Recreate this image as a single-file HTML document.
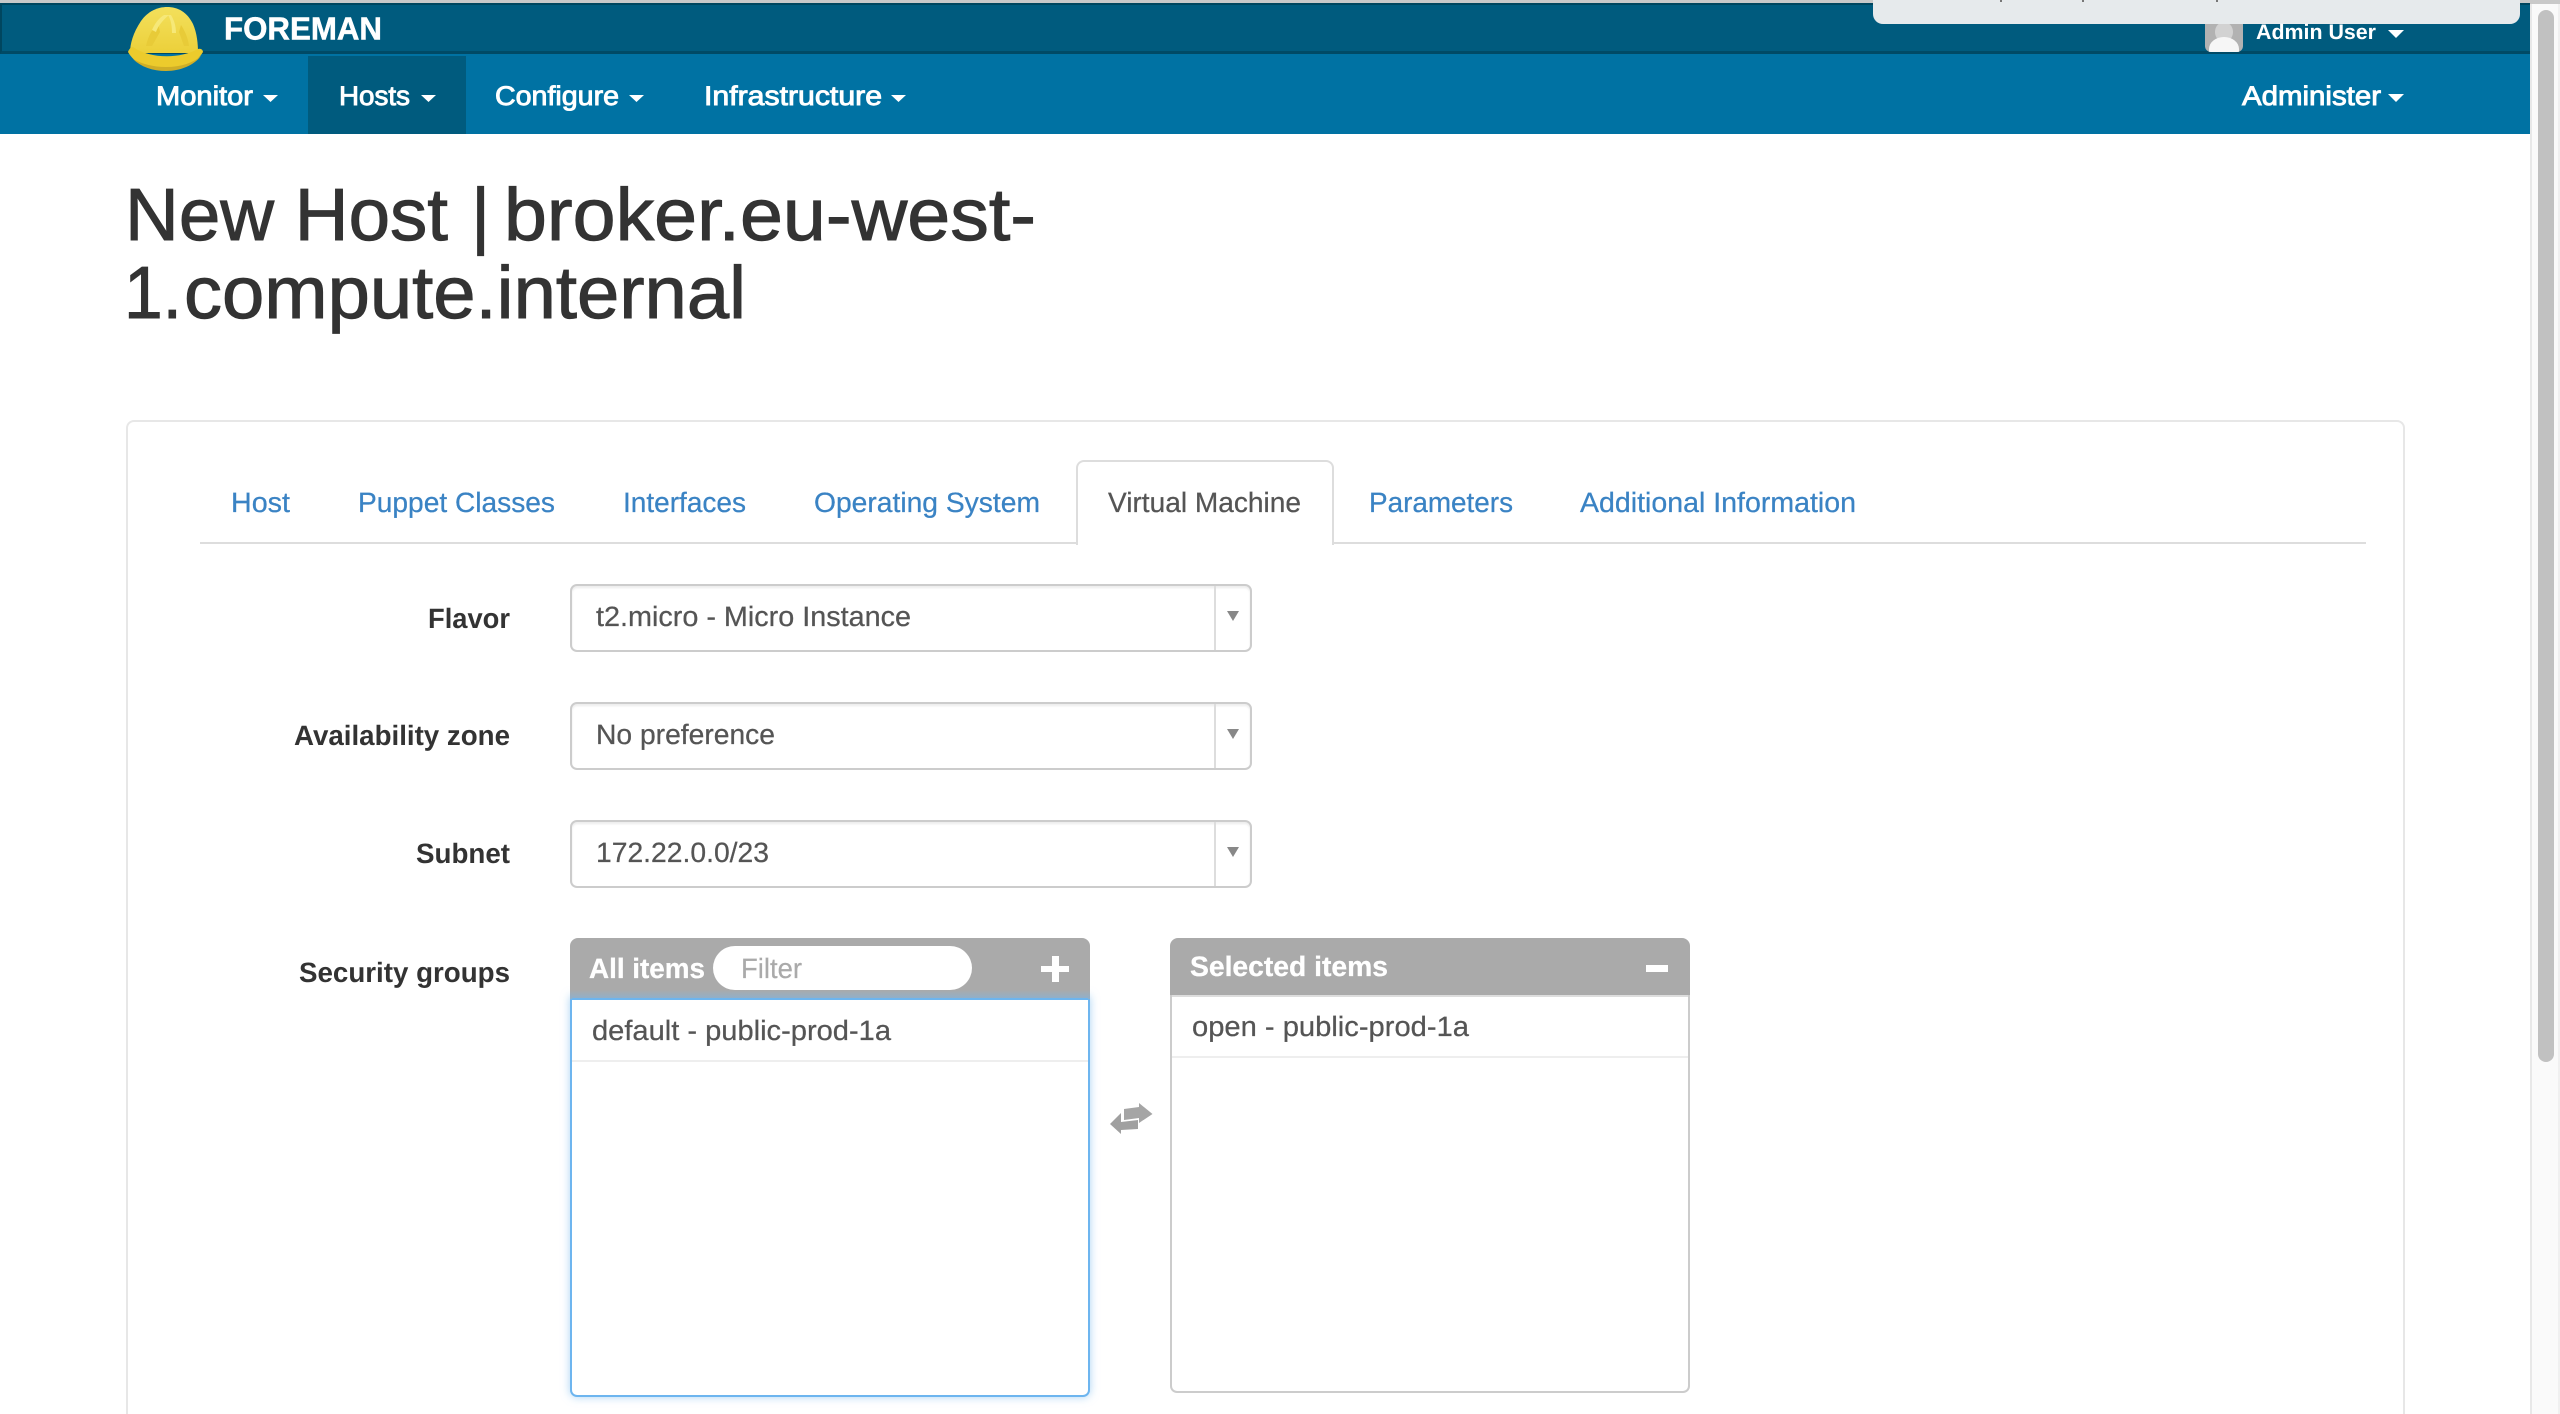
<!DOCTYPE html>
<html lang="en">
<head>
<meta charset="utf-8">
<title>New Host | broker.eu-west-1.compute.internal</title>
<style>
html,body{margin:0;padding:0;width:2560px;height:1414px;overflow:hidden;background:#fff}
body{position:relative;font-family:"Liberation Sans",sans-serif}
.b{position:absolute;box-sizing:border-box}
svg{position:absolute;left:0;top:0}
text{font-family:"Liberation Sans",sans-serif;text-rendering:geometricPrecision}
.nav{font-size:27px;fill:#fff;stroke:#fff;stroke-width:.9px}
.tab{font-size:28px;fill:#3a83c4;stroke:#3a83c4;stroke-width:.25px}
.lab{font-size:28px;font-weight:bold;fill:#333}
.val{font-size:28px;fill:#555;stroke:#555;stroke-width:.25px}
.h1{font-size:74px;fill:#333;stroke:#333;stroke-width:1px}
.wh{font-size:28px;font-weight:bold;fill:#fff;stroke:#fff;stroke-width:.3px}
.sel{border:2px solid #ccc;border-radius:7px;box-shadow:inset 0 2px 2px rgba(0,0,0,.08);background:#fff;left:570px;width:682px}
.div{width:2px;background:#ddd;left:1214px}
.hd{background:#aaa;border-radius:8px 8px 0 0}
</style>
</head>
<body>
<!-- top bars -->
<div class="b" style="left:0;top:0;width:2560px;height:4px;background:#c9c9c9"></div>
<div class="b" style="left:0;top:3px;width:2530px;height:51px;background:#005b7e;border-top:2px solid #00465f;border-left:2px solid #00465f;border-bottom:3px solid #004a66"></div>
<div class="b" style="left:0;top:54px;width:2530px;height:80px;background:#0072a3"></div>
<div class="b" style="left:308px;top:56px;width:158px;height:78px;background:#005b7e"></div>

<!-- avatar -->
<div class="b" style="left:2205px;top:20px;width:38px;height:32px;background:#b2b2b2;border-radius:0 0 6px 6px;overflow:hidden">
  <div class="b" style="left:10px;top:2px;width:18px;height:20px;border-radius:50%;background:#d2d2d2"></div>
  <div class="b" style="left:4px;top:17px;width:30px;height:24px;border-radius:50% 50% 0 0;background:#f6f6f6"></div>
</div>

<!-- popup -->
<div class="b" style="left:1873px;top:0;width:647px;height:24px;background:#e6eaec;border-radius:0 0 10px 10px"></div>
<div class="b" style="left:2000px;top:0;width:2px;height:2px;background:#777"></div>
<div class="b" style="left:2082px;top:0;width:2px;height:2px;background:#777"></div>
<div class="b" style="left:2216px;top:0;width:2px;height:2px;background:#777"></div>

<!-- scrollbar -->
<div class="b" style="left:2530px;top:4px;width:30px;height:1410px;background:#fafafa;border-left:2px solid #e8e8e8;border-right:2px solid #f0f0f0"></div>
<div class="b" style="left:2538px;top:10px;width:16px;height:1052px;background:#c1c1c1;border-radius:8px"></div>

<!-- main panel -->
<div class="b" style="left:126px;top:420px;width:2279px;height:994px;border:2px solid #e7e7e7;border-bottom:0;border-radius:8px 8px 0 0"></div>

<!-- tabs -->
<div class="b" style="left:200px;top:542px;width:2166px;height:2px;background:#ddd"></div>
<div class="b" style="left:1076px;top:460px;width:258px;height:85px;background:#fff;border:2px solid #ddd;border-bottom:0;border-radius:8px 8px 0 0"></div>

<!-- selects -->
<div class="b sel" style="top:584px;height:68px"></div>
<div class="b div" style="top:586px;height:64px"></div>
<div class="b sel" style="top:702px;height:68px"></div>
<div class="b div" style="top:704px;height:64px"></div>
<div class="b sel" style="top:820px;height:68px"></div>
<div class="b div" style="top:822px;height:64px"></div>

<!-- left list -->
<div class="b" style="left:570px;top:996px;width:520px;height:401px;background:#fff;border:2px solid #6db5ef;border-radius:0 0 7px 7px;box-shadow:0 0 9px rgba(102,175,233,.55)"></div>
<div class="b hd" style="left:570px;top:938px;width:520px;height:61px;background:linear-gradient(#aaa 0,#aaa 85%,#8fb0cc 100%)"></div>
<div class="b" style="left:572px;top:998px;width:516px;height:2px;background:#6db5ef"></div>
<div class="b" style="left:572px;top:1060px;width:516px;height:2px;background:#eee"></div>
<div class="b" style="left:713px;top:946px;width:259px;height:44px;background:#fff;border-radius:22px"></div>
<div class="b" style="left:1041px;top:966px;width:28px;height:6px;background:#fff"></div>
<div class="b" style="left:1052px;top:956px;width:7px;height:26px;background:#fff"></div>

<!-- right list -->
<div class="b" style="left:1170px;top:990px;width:520px;height:403px;background:#fff;border:2px solid #ccc;border-radius:0 0 7px 7px"></div>
<div class="b hd" style="left:1170px;top:938px;width:520px;height:57px"></div>
<div class="b" style="left:1172px;top:995px;width:516px;height:2px;background:#ddd"></div>
<div class="b" style="left:1172px;top:1056px;width:516px;height:2px;background:#eee"></div>
<div class="b" style="left:1646px;top:965px;width:22px;height:7px;background:#fff"></div>

<!-- text and icons -->
<svg width="2560" height="1414" viewBox="0 0 2560 1414" xmlns="http://www.w3.org/2000/svg">
  <defs>
    <linearGradient id="dome" x1="0" y1="0" x2="0" y2="1">
      <stop offset="0" stop-color="#f3e05c"/>
      <stop offset="1" stop-color="#ecd03a"/>
    </linearGradient>
  </defs>
  <!-- helmet -->
  <path d="M130 53C130 44 133 33 141 21C148 11 158 7 167 7C178 7 187 12 193 24C197 33 198 44 198 53Z" fill="url(#dome)"/>
  <path d="M146 46C148 36 153 28 158 23L160 32L152 46Z" fill="#e8cb38"/>
  <path d="M189 46C188 38 185 31 181 25L179 32L184 46Z" fill="#e8cb38"/>
  <path d="M152 30C155 23 159 18 164 15L169 15C163 20 158 26 156 32Z" fill="#f6e878"/>
  <path d="M171 15C174 20 176 26 176 33L172 33C172 26 171 20 168 15Z" fill="#f6e878"/>
  <path d="M128 52C129 49 131 47 133 47C150 59 180 59 198 49C201 48 203 50 203 52C196 64 182 70 166 70C148 70 134 63 128 52Z" fill="#eccb2c"/>
  <path d="M133 59C141 67 153 71 166 71C181 71 194 65 201 56C193 63 181 67 166 67C153 67 142 64 133 59Z" fill="#cfae27"/>

  <text x="224" y="39.500" font-size="32" font-weight="bold" fill="#fff" stroke="#fff" stroke-width=".5" textLength="158" lengthAdjust="spacingAndGlyphs">FOREMAN</text>
  <text x="2256" y="39" font-size="21" font-weight="bold" fill="#fff" textLength="120" lengthAdjust="spacingAndGlyphs">Admin User</text>
  <path d="M2388 30H2404L2396 38Z" fill="#fff"/>

  <text class="nav" x="156" y="105" textLength="97" lengthAdjust="spacingAndGlyphs">Monitor</text>
  <path d="M263 95H278L270.500 102Z" fill="#fff"/>
  <text class="nav" x="339" y="105" textLength="71" lengthAdjust="spacingAndGlyphs">Hosts</text>
  <path d="M421 95H436L428.500 102Z" fill="#fff"/>
  <text class="nav" x="495" y="105" textLength="124" lengthAdjust="spacingAndGlyphs">Configure</text>
  <path d="M629 95H644L636.500 102Z" fill="#fff"/>
  <text class="nav" x="704" y="105" textLength="178" lengthAdjust="spacingAndGlyphs">Infrastructure</text>
  <path d="M891 95H906L898.500 102Z" fill="#fff"/>
  <text class="nav" x="2242" y="105" textLength="139" lengthAdjust="spacingAndGlyphs">Administer</text>
  <path d="M2388 94H2404L2396 102Z" fill="#fff"/>

  <text class="h1" x="125" y="240" textLength="323" lengthAdjust="spacingAndGlyphs">New Host</text>
  <text class="h1" x="471" y="240">|</text>
  <text class="h1" x="504" y="240" textLength="532" lengthAdjust="spacingAndGlyphs">broker.eu-west-</text>
  <text class="h1" x="124" y="318" textLength="58" lengthAdjust="spacingAndGlyphs">1.</text>
  <text class="h1" x="184" y="318" textLength="562" lengthAdjust="spacingAndGlyphs">compute.internal</text>

  <text class="tab" x="231" y="512" textLength="59" lengthAdjust="spacingAndGlyphs">Host</text>
  <text class="tab" x="358" y="512" textLength="197" lengthAdjust="spacingAndGlyphs">Puppet Classes</text>
  <text class="tab" x="623" y="512" textLength="123" lengthAdjust="spacingAndGlyphs">Interfaces</text>
  <text class="tab" x="814" y="512" textLength="226" lengthAdjust="spacingAndGlyphs">Operating System</text>
  <text x="1108" y="512" font-size="28" fill="#555" stroke="#555" stroke-width=".25" textLength="193" lengthAdjust="spacingAndGlyphs">Virtual Machine</text>
  <text class="tab" x="1369" y="512" textLength="144" lengthAdjust="spacingAndGlyphs">Parameters</text>
  <text class="tab" x="1580" y="512" textLength="276" lengthAdjust="spacingAndGlyphs">Additional Information</text>

  <text class="lab" x="428" y="628" textLength="82" lengthAdjust="spacingAndGlyphs">Flavor</text>
  <text class="lab" x="294" y="745" textLength="216" lengthAdjust="spacingAndGlyphs">Availability zone</text>
  <text class="lab" x="416" y="863" textLength="94" lengthAdjust="spacingAndGlyphs">Subnet</text>
  <text class="lab" x="299" y="982" textLength="211" lengthAdjust="spacingAndGlyphs">Security groups</text>

  <text class="val" x="596" y="626" textLength="315" lengthAdjust="spacingAndGlyphs">t2.micro - Micro Instance</text>
  <text class="val" x="596" y="744" textLength="179" lengthAdjust="spacingAndGlyphs">No preference</text>
  <text class="val" x="596" y="862" textLength="173" lengthAdjust="spacingAndGlyphs">172.22.0.0/23</text>
  <path d="M1227 611H1239L1233 621Z" fill="#888"/>
  <path d="M1227 729H1239L1233 739Z" fill="#888"/>
  <path d="M1227 847H1239L1233 857Z" fill="#888"/>

  <text class="wh" x="589" y="978" textLength="116" lengthAdjust="spacingAndGlyphs">All items</text>
  <text x="741" y="978" font-size="28" fill="#aaa" stroke="#aaa" stroke-width=".2" textLength="61" lengthAdjust="spacingAndGlyphs">Filter</text>
  <text class="val" x="592" y="1040" textLength="299" lengthAdjust="spacingAndGlyphs">default - public-prod-1a</text>
  <text class="wh" x="1190" y="976" textLength="198" lengthAdjust="spacingAndGlyphs">Selected items</text>
  <text class="val" x="1192" y="1036" textLength="277" lengthAdjust="spacingAndGlyphs">open - public-prod-1a</text>

  <!-- transfer arrows -->
  <path d="M1124 1109L1139 1107V1103L1152.500 1114L1139 1123V1118L1124 1120Z" fill="#a5a5a5"/>
  <path d="M1138 1120L1121 1122V1113L1110 1124L1121 1134V1130L1138 1129Z" fill="#a0a0a0"/>
</svg>
</body>
</html>
